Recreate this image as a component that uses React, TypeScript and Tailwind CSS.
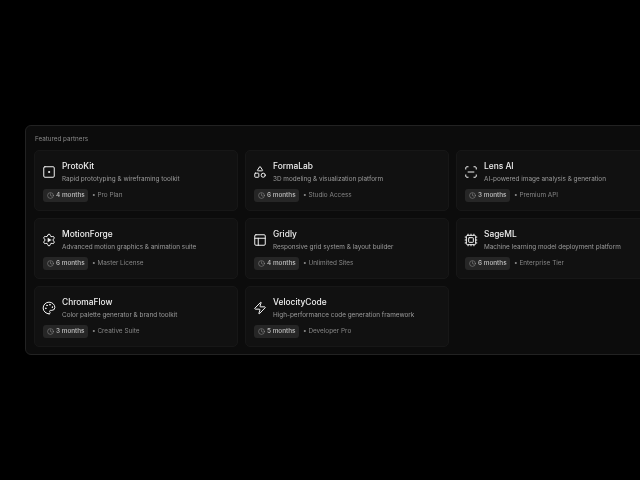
import { Clock, Cpu, LucideIcon, Palette, PanelsTopLeft, ScanLine, Settings, Shapes, SquareDot, Zap } from "lucide-react";

type Partner = {
 name: string;
 desc: string;
 months: string;
 plan: string;
 icon: LucideIcon;
};

const partners: Partner[] = [
 { name: "ProtoKit", desc: "Rapid prototyping & wireframing toolkit", months: "4 months", plan: "Pro Plan", icon: SquareDot },
 { name: "FormaLab", desc: "3D modeling & visualization platform", months: "6 months", plan: "Studio Access", icon: Shapes },
 { name: "Lens AI", desc: "AI-powered image analysis & generation", months: "3 months", plan: "Premium API", icon: ScanLine },
 { name: "MotionForge", desc: "Advanced motion graphics & animation suite", months: "6 months", plan: "Master License", icon: Settings },
 { name: "Gridly", desc: "Responsive grid system & layout builder", months: "4 months", plan: "Unlimited Sites", icon: PanelsTopLeft },
 { name: "SageML", desc: "Machine learning model deployment platform", months: "6 months", plan: "Enterprise Tier", icon: Cpu },
 { name: "ChromaFlow", desc: "Color palette generator & brand toolkit", months: "3 months", plan: "Creative Suite", icon: Palette },
 { name: "VelocityCode", desc: "High-performance code generation framework", months: "5 months", plan: "Developer Pro", icon: Zap },
];

function PartnerCard({ partner }: { partner: Partner }) {
 const Icon = partner.icon;
 return (
  <div className="h-[61px] rounded-[5px] border border-[#171717] bg-[#111111] pl-[8px] pt-[9px]">
   <div className="flex items-center gap-[7px]">
    <div className="relative flex w-[12px] justify-center">
     <Icon size={14} strokeWidth={1.7} className="shrink-0 text-[#f5f5f5]" />
     {partner.name === "MotionForge" && (
      <svg viewBox="0 0 24 24" className="absolute left-[-1px] top-0 h-[14px] w-[14px]">
       <circle cx="12" cy="12" r="4.4" fill="#111111" />
       <path d="M9.8 8v8l6.4-4z" fill="#f5f5f5" />
      </svg>
     )}
    </div>
    <div>
     <div className="text-[8.4px] font-medium leading-[13px] text-[#f0f0f0]">{partner.name}</div>
     <div className="mt-[1px] whitespace-nowrap text-[6.4px] leading-[10px] text-[#9a9a9a]">{partner.desc}</div>
    </div>
   </div>
   <div className="mt-[5px] flex items-center">
    <div className="flex h-[13px] w-[45px] items-center gap-[2px] rounded-[3px] bg-[#262626] pl-[4px]">
     <Clock size={7} strokeWidth={1.5} className="shrink-0 text-[#a8a8a8]" />
     <span className="whitespace-nowrap text-[6.4px] font-medium leading-none text-[#c0c0c0]">{partner.months}</span>
    </div>
    <span className="ml-[4px] whitespace-nowrap text-[6.4px] leading-none text-[#858585]">• {partner.plan}</span>
   </div>
  </div>
 );
}

export default function App() {
 return (
  <main className="flex h-screen w-full items-center overflow-hidden bg-black pl-[25px] font-['Inter',sans-serif] antialiased">
   <section className="h-[230px] w-[680px] shrink-0 rounded-[6px] border border-[#222222] bg-[#0c0c0c] pl-[8px] pt-[9px] [will-change:transform]">
    <h2 className="pl-[1px] text-[6.3px] font-normal leading-[9px] text-[#8a8a8a]">Featured partners</h2>
    <div className="mt-[6px] grid w-[640px] grid-cols-[204px_204px_204px] gap-[7px]">
     {partners.map((partner) => (
      <PartnerCard key={partner.name} partner={partner} />
     ))}
    </div>
   </section>
  </main>
 );
}
